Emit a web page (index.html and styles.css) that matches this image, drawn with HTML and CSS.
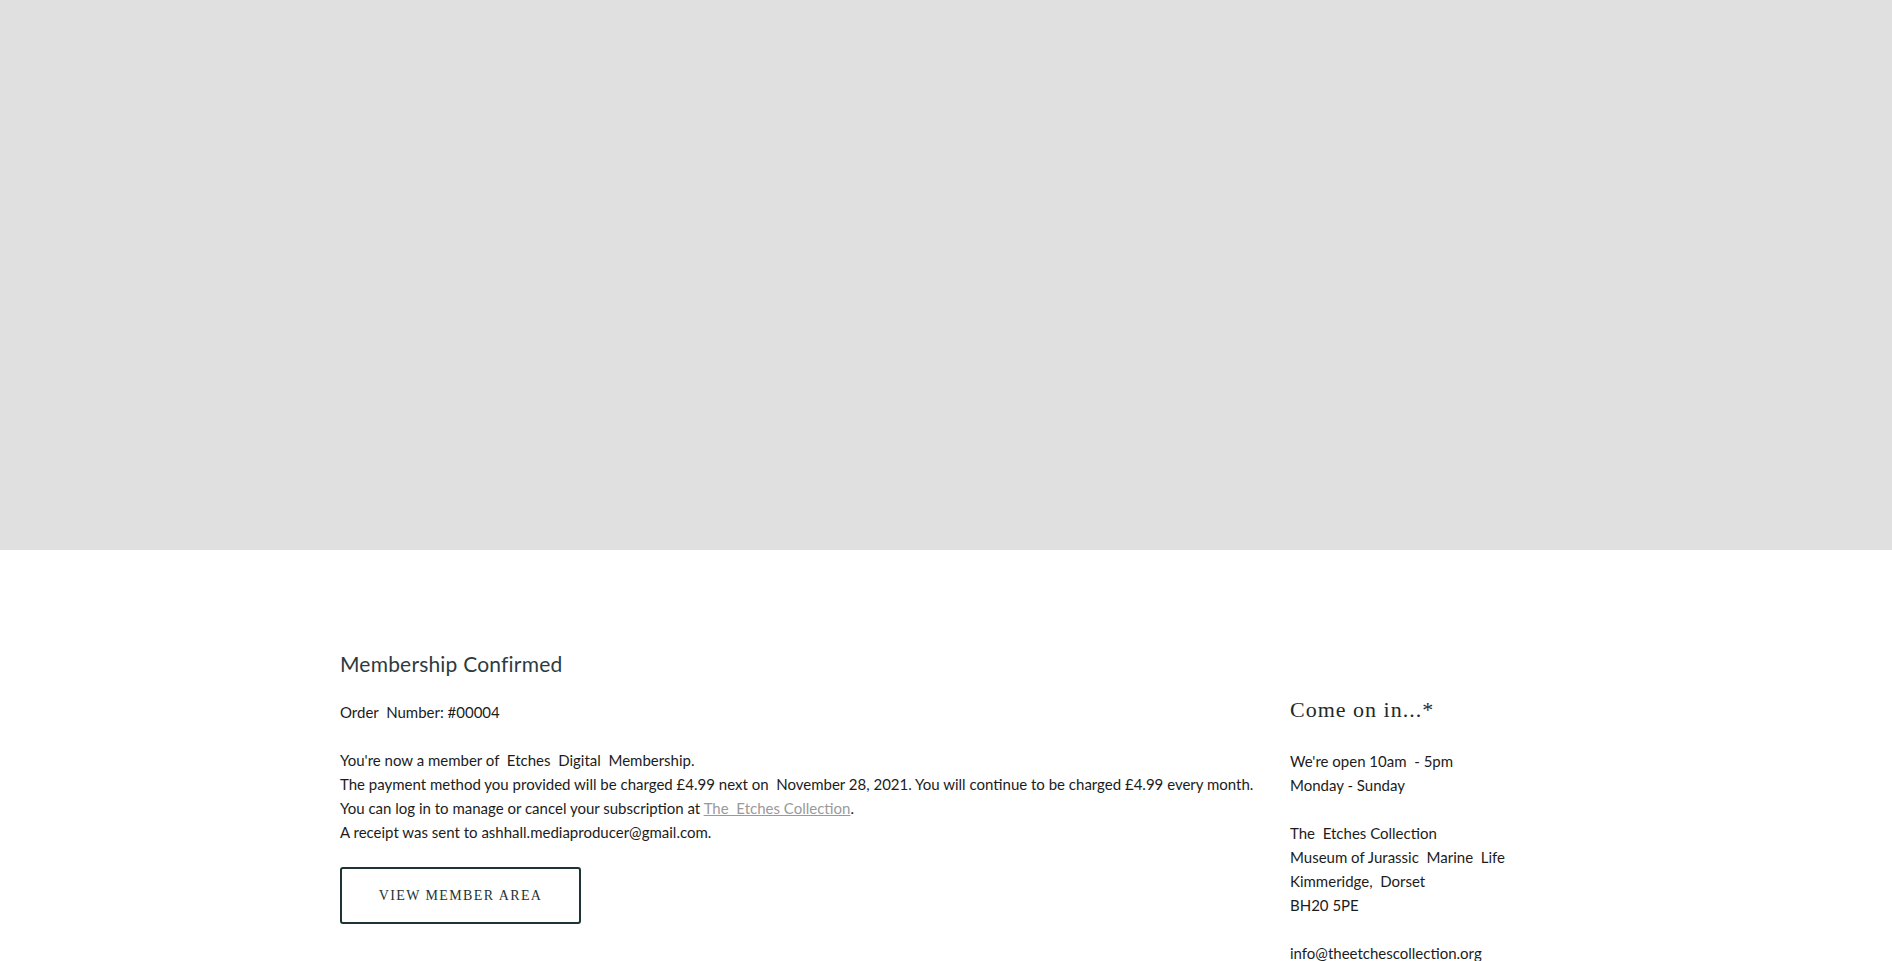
FILE: index.html
```html
<!DOCTYPE html>
<html lang="en">
<head>
    <meta charset="UTF-8">
    <meta name="viewport" content="width=device-width, initial-scale=1.0">
    <title>Membership Confirmed</title>
    <link rel="stylesheet" href="styles.css">
</head>
<body>
    <div class="banner"></div>

    <div class="content">
        <div class="main">
            <h1>Membership Confirmed</h1>
            <p class="order">Order &nbsp;Number: #00004</p>

            <p class="details">
                You're now a member of &nbsp;Etches &nbsp;Digital &nbsp;Membership.<br>
                The payment method you provided will be charged £4.99 next on &nbsp;November 28, 2021. You will continue to be charged £4.99 every month.<br>
                You can log in to manage or cancel your subscription at <a href="#">The &nbsp;Etches Collection</a>.<br>
                A receipt was sent to ashhall.mediaproducer@gmail.com.
            </p>

            <a class="button" href="#">View Member Area</a>
        </div>

        <aside class="sidebar">
            <h2>Come on in...*</h2>
            <p>We're open 10am &nbsp;- 5pm<br>Monday - Sunday</p>
            <p>The &nbsp;Etches Collection<br>Museum of Jurassic &nbsp;Marine &nbsp;Life<br>Kimmeridge, &nbsp;Dorset<br>BH20 5PE</p>
            <p>info@theetchescollection.org</p>
        </aside>
    </div>
</body>
</html>
```

FILE: styles.css
```css
body {
    margin: 0;
    font-family: Lato, 'Open Sans', sans-serif;
    font-size: 15px;
    line-height: 24px;
    color: #1c1c1c;
    background: #fff;
}

.banner {
    height: 550px;
    background-color: #e0e0e0;
}

.content {
    display: grid;
    grid-template-columns: 900px 262px;
    column-gap: 50px;
    padding: 99px 340px 0;
    align-items: start;
}

h1 {
    margin: 0;
    font-size: 21px;
    line-height: 30px;
    font-weight: 400;
    color: #2d3b3e;
    letter-spacing: 0.2px;
}

.order {
    margin: 21px 0 0;
}

.details {
    margin: 24px 0 0;
    white-space: nowrap;
}

.details a {
    color: #9a9a9a;
    text-decoration: underline;
}

.button {
    display: inline-flex;
    align-items: center;
    justify-content: center;
    box-sizing: border-box;
    width: 241px;
    height: 57px;
    margin-top: 23px;
    border: 2px solid #1d3336;
    border-radius: 3px;
    font-family: 'Liberation Serif', serif;
    font-size: 14px;
    letter-spacing: 1.4px;
    text-transform: uppercase;
    text-decoration: none;
    color: #1d3336;
}

.sidebar {
    padding-top: 46px;
}

.sidebar h2 {
    margin: 0;
    font-family: 'Liberation Serif', serif;
    font-size: 22px;
    line-height: 30px;
    font-weight: 400;
    letter-spacing: 1px;
    color: #1f2a2c;
}

.sidebar p {
    margin: 24px 0 0;
}
```
